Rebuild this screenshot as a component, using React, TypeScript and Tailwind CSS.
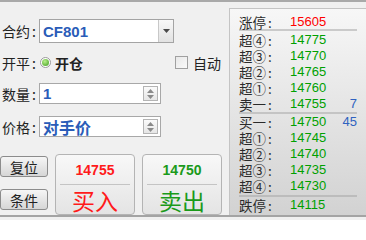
import React from "react";

const cjk = { fontFamily: '"Noto Sans CJK SC", "Liberation Sans", sans-serif' };
const num = { fontFamily: '"Liberation Sans", "Noto Sans CJK SC", sans-serif' };

type Row = { label: string; price: string; color: string; vol?: string };

const asks: Row[] = [
  { label: "超④", price: "14775", color: "text-[#00a000]" },
  { label: "超③", price: "14770", color: "text-[#00a000]" },
  { label: "超②", price: "14765", color: "text-[#00a000]" },
  { label: "超①", price: "14760", color: "text-[#00a000]" },
  { label: "卖一", price: "14755", color: "text-[#00a000]", vol: "7" },
];

const bids: Row[] = [
  { label: "买一", price: "14750", color: "text-[#00a000]", vol: "45" },
  { label: "超①", price: "14745", color: "text-[#00a000]" },
  { label: "超②", price: "14740", color: "text-[#00a000]" },
  { label: "超③", price: "14735", color: "text-[#00a000]" },
  { label: "超④", price: "14730", color: "text-[#00a000]" },
];

function QuoteRow({ row, h = "h-[16px]" }: { row: Row; h?: string }) {
  return (
    <div className={`flex items-center ${h}`}>
      <span style={cjk} className="w-[51px] shrink-0 whitespace-nowrap text-[13.5px] leading-[14px] text-[#2a2a2a]">
        {row.label}
        <span className="ml-[2px]">:</span>
      </span>
      <span style={num} className={`flex-1 text-[13px] leading-[14px] ${row.color}`}>
        {row.price}
      </span>
      <span style={num} className="text-[13px] leading-[14px] text-[#2f62c0]">
        {row.vol}
      </span>
    </div>
  );
}

function Spinner() {
  return (
    <div className="w-[15px] h-[15px] mr-[2px] border border-[#b4b4b4] bg-gradient-to-b from-[#fbfbfb] to-[#e6e6e6] flex flex-col items-center justify-center gap-[2px]">
      <svg width="7" height="4" viewBox="0 0 7 4">
        <path d="M3.5 0L7 4H0z" fill="#8a8a8a" />
      </svg>
      <svg width="7" height="4" viewBox="0 0 7 4">
        <path d="M0 0h7L3.5 4z" fill="#8a8a8a" />
      </svg>
    </div>
  );
}

function Label({ text }: { text: string }) {
  return (
    <span style={cjk} className="w-[37px] shrink-0 whitespace-nowrap text-[14px] leading-none text-[#222]">
      {text}
      <span className="ml-[2px]">:</span>
    </span>
  );
}

function SmallBtn({ text }: { text: string }) {
  return (
    <button
      style={cjk}
      className="w-[48px] h-[21px] rounded-[3px] border border-[#8c8c8c] bg-gradient-to-b from-[#f6f6f6] to-[#d6d6d6] text-[14px] leading-none text-[#222]"
    >
      {text}
    </button>
  );
}

function TradeBtn({ price, text, color }: { price: string; text: string; color: string }) {
  return (
    <button className="w-[80px] h-[61px] rounded-[4px] border border-[#b4b4b4] bg-gradient-to-b from-[#f8f8f8] to-[#e4e4e4] flex flex-col items-center px-[4px]">
      <span style={num} className={`mt-[8px] text-[14px] font-bold leading-none ${color}`}>
        {price}
      </span>
      <div className="w-full h-[1px] bg-[#c4c4c4] mt-[7px]" />
      <span style={cjk} className={`mt-[4px] text-[23px] font-normal leading-none ${color}`}>
        {text}
      </span>
    </button>
  );
}

export default function App() {
  return (
    <div className="w-[366px] h-[220px] bg-[#f0f0f0] border-t-2 border-[#a9a9a9] overflow-hidden">
      <div className="h-[215px] flex border-b-2 border-[#a4a4a4]">
        <div className="w-[229px] shrink-0 flex flex-col pt-[17px]">
          <div className="flex items-center h-[24px] pl-[2px]">
            <Label text="合约" />
            <div className="w-[135px] h-[24px] border border-[#a4a4a4] bg-white flex items-center">
              <span style={num} className="flex-1 pl-[3px] text-[15px] font-bold text-[#2a5cb8] leading-none">
                CF801
              </span>
              <div className="w-[15px] h-[22px] border-l border-[#c8c8c8] bg-gradient-to-b from-[#f8f8f8] to-[#e2e2e2] flex items-center justify-center">
                <svg width="7" height="4" viewBox="0 0 7 4">
                  <path d="M0 0h7L3.5 4z" fill="#4a4a4a" />
                </svg>
              </div>
            </div>
          </div>

          <div className="flex items-center h-[20px] mt-[10px] pl-[2px]">
            <Label text="开平" />
            <div className="w-[11px] h-[11px] rounded-full border border-[#9a9a9a] bg-white flex items-center justify-center ml-[1px]">
              <div className="w-[7px] h-[7px] rounded-full bg-[radial-gradient(circle_at_40%_35%,#b8f08a,#3c9a1c)]" />
            </div>
            <span style={cjk} className="ml-[4px] whitespace-nowrap text-[14px] font-bold leading-none text-[#222]">
              开仓
            </span>
            <div className="ml-auto w-[13px] h-[13px] border border-[#a0a0a0] bg-gradient-to-br from-[#e8e8e8] to-[#fafafa]" />
            <span style={cjk} className="ml-[5px] mr-[8px] whitespace-nowrap text-[14px] leading-none text-[#222]">
              自动
            </span>
          </div>

          <div className="flex items-center h-[21px] mt-[11px] pl-[2px]">
            <Label text="数量" />
            <div className="w-[122px] h-[21px] border border-[#a8a8a8] bg-white flex items-center">
              <span style={num} className="flex-1 pl-[3px] text-[15px] font-bold text-[#2a5cb8] leading-none">
                1
              </span>
              <Spinner />
            </div>
          </div>

          <div className="flex items-center h-[21px] mt-[12px] pl-[2px]">
            <Label text="价格" />
            <div className="w-[122px] h-[21px] border border-[#a8a8a8] bg-white flex items-center">
              <span style={cjk} className="flex-1 pl-[3px] whitespace-nowrap text-[16px] font-bold text-[#2a5cb8] leading-none">
                对手价
              </span>
              <Spinner />
            </div>
          </div>

          <div className="flex mt-[17px]">
            <div className="flex flex-col gap-[12px] pt-[2px]">
              <SmallBtn text="复位" />
              <SmallBtn text="条件" />
            </div>
            <div className="ml-[7px] flex gap-[7px]">
              <TradeBtn price="14755" text="买入" color="text-[#ff1a1a]" />
              <TradeBtn price="14750" text="卖出" color="text-[#1a9a1a]" />
            </div>
          </div>
        </div>

        <div className="flex-1 mt-[6px] border-l border-t border-[#c4c4c4] bg-gradient-to-b from-[#f7f7f7] to-[#d2d2d2] pl-[9px] pr-[9px] pt-[6px]">
          <QuoteRow row={{ label: "涨停", price: "15605", color: "text-[#ff0000]" }} h="h-[14px]" />
          <div className="h-[2px] bg-[#cacaca]" />
          <div className="mt-[1px]">
            {asks.map((r, i) => (
              <QuoteRow key={"a" + i} row={r} />
            ))}
          </div>
          <div className="h-[2px] bg-[#c4c4c4]" />
          {bids.map((r, i) => (
            <QuoteRow key={"b" + i} row={r} />
          ))}
          <div className="h-[2px] mt-[1px] bg-[#bcbcbc]" />
          <QuoteRow row={{ label: "跌停", price: "14115", color: "text-[#00a000]" }} />
        </div>
      </div>
    </div>
  );
}
